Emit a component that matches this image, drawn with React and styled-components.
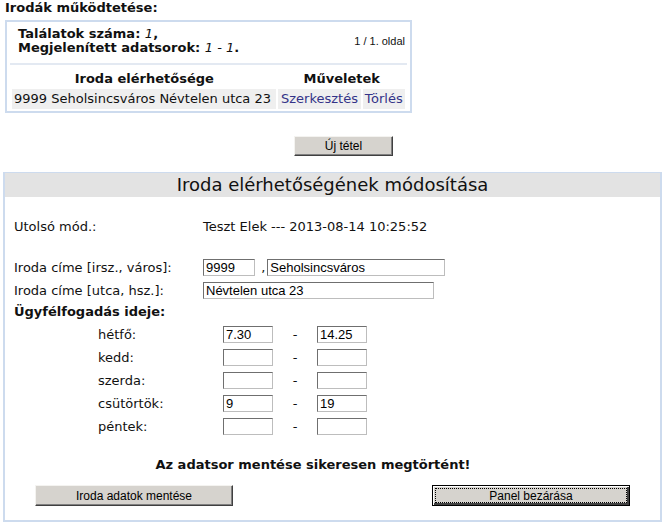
import React from 'react'
import styled, { createGlobalStyle } from 'styled-components'

const GlobalStyle = createGlobalStyle`
  body {
    margin: 0;
    background: #fff;
    color: #111;
    font-family: 'DejaVu Sans', Verdana, sans-serif;
    font-size: 13px;
  }
`

const Page = styled.div`
  width: 665px;
  padding: 1px 0 0 0;
`

const SectionTitle = styled.div`
  font-weight: bold;
  margin-left: 5px;
  line-height: 14px;
`

const ListBox = styled.div`
  margin: 5px 0 0 5px;
  width: 397px;
  border: 2px solid #cddbee;
  padding: 5px 3px 0 3px;
`

const Summary = styled.div`
  display: flex;
  align-items: center;
  justify-content: space-between;
  padding: 0 2px 8px 8px;
  border-bottom: 2px solid #e3e9f2;
  font-weight: bold;
  line-height: 14px;
  i {
    font-weight: normal;
  }
`

const Pager = styled.span`
  font-family: 'Liberation Sans', Arial, sans-serif;
  font-size: 11px;
  font-weight: normal;
`

const Table = styled.table`
  border-collapse: separate;
  border-spacing: 2px;
  margin-top: 4px;
  width: 100%;
  th {
    font-weight: bold;
    padding: 0;
    line-height: 16px;
  }
  td {
    background: #efefef;
    padding: 2px 2px;
    line-height: 16px;
    white-space: nowrap;
  }
`

const ActionLink = styled.td`
  color: #333388;
  text-align: center;
`

const NewRow = styled.div`
  padding: 23px 0 0 294px;
`

const Button = styled.button`
  font-family: 'Liberation Sans', Arial, sans-serif;
  font-size: 12px;
  color: #000;
  background: #d6d3ce;
  width: ${p => p.$w || 99}px;
  height: ${p => p.$h || 20}px;
  padding: 0;
  border: 1px solid;
  border-color: #f4f3f0 #404040 #404040 #f4f3f0;
  box-shadow: inset -1px -1px 0 #808080;
  outline: ${p => (p.$focus ? '1px dotted #000' : 'none')};
  outline-offset: -4px;
  ${p => p.$focus && 'border: 1px solid #000; box-shadow: inset 1px 1px 0 #fff, inset -2px -2px 0 #404040;'}
`

const Panel = styled.div`
  margin: 16px 0 0 3px;
  width: 655px;
  border: 2px solid #cddbee;
  border-top-width: 1px;
  padding-bottom: 14px;
`

const PanelTitle = styled.div`
  background: #e3e3e3;
  text-align: center;
  font-size: 18px;
  line-height: 24px;
  color: #111;
`

const Form = styled.div`
  padding: 18px 0 0 9px;
`

const FieldRow = styled.div`
  display: grid;
  grid-template-columns: 189px 1fr;
  align-items: center;
  height: 23px;
  margin-top: ${p => p.$gap || 0}px;
`

const Inline = styled.div`
  display: flex;
  align-items: center;
  gap: 2px;
`

const Input = styled.input`
  box-sizing: border-box;
  width: ${p => p.$w}px;
  height: 17px;
  border: 1px solid #6f6f6f;
  border-right-color: #bdbdbd;
  border-bottom-color: #bdbdbd;
  padding: 0 2px;
  font-family: 'Liberation Sans', Arial, sans-serif;
  font-size: 13px;
  color: #000;
  background: #fff;
`

const SubTitle = styled.div`
  font-weight: bold;
  line-height: 23px;
  margin-top: -2px;
`

const DayRow = styled.div`
  display: grid;
  grid-template-columns: 125px 50px 44px 50px;
  align-items: center;
  height: 23px;
  padding-left: 84px;
`

const Dash = styled.span`
  text-align: center;
`

const Message = styled.div`
  font-weight: bold;
  font-size: 13px;
  padding-left: 134px;
  width: 330px;
  text-align: center;
  margin-top: 19px;
`

const Actions = styled.div`
  display: flex;
  justify-content: space-between;
  padding: 13px 30px 0 30px;
`

const days = [
  ['hétfő:', '7.30', '14.25'],
  ['kedd:', '', ''],
  ['szerda:', '', ''],
  ['csütörtök:', '9', '19'],
  ['péntek:', '', '']
]

export default function App() {
  return (
    <Page>
      <GlobalStyle />
      <SectionTitle>Irodák működtetése:</SectionTitle>
      <ListBox>
        <Summary>
          <div>
            Találatok száma: <i>1</i>,<br />
            Megjelenített adatsorok: <i>1 - 1</i>.
          </div>
          <Pager>1 / 1. oldal</Pager>
        </Summary>
        <Table>
          <thead>
            <tr>
              <th>Iroda elérhetősége</th>
              <th colSpan={2}>Műveletek</th>
            </tr>
          </thead>
          <tbody>
            <tr>
              <td>9999 Seholsincsváros Névtelen utca 23</td>
              <ActionLink>Szerkesztés</ActionLink>
              <ActionLink>Törlés</ActionLink>
            </tr>
          </tbody>
        </Table>
      </ListBox>
      <NewRow>
        <Button>Új tétel</Button>
      </NewRow>
      <Panel>
        <PanelTitle>Iroda elérhetőségének módosítása</PanelTitle>
        <Form>
          <FieldRow>
            <span>Utolsó mód.:</span>
            <span>Teszt Elek --- 2013-08-14 10:25:52</span>
          </FieldRow>
          <FieldRow $gap={18}>
            <span>Iroda címe [irsz., város]:</span>
            <Inline>
              <Input $w={52} defaultValue="9999" />
              <span>&nbsp;,</span>
              <Input $w={178} defaultValue="Seholsincsváros" />
            </Inline>
          </FieldRow>
          <FieldRow>
            <span>Iroda címe [utca, hsz.]:</span>
            <Inline>
              <Input $w={231} defaultValue="Névtelen utca 23" />
            </Inline>
          </FieldRow>
          <SubTitle>Ügyfélfogadás ideje:</SubTitle>
          {days.map(([d, a, b]) => (
            <DayRow key={d}>
              <span>{d}</span>
              <Input $w={50} defaultValue={a} />
              <Dash>-</Dash>
              <Input $w={50} defaultValue={b} />
            </DayRow>
          ))}
          <Message>Az adatsor mentése sikeresen megtörtént!</Message>
        </Form>
        <Actions>
          <Button $w={198} $h={21}>Iroda adatok mentése</Button>
          <Button $w={198} $h={21} $focus>Panel bezárása</Button>
        </Actions>
      </Panel>
    </Page>
  )
}
